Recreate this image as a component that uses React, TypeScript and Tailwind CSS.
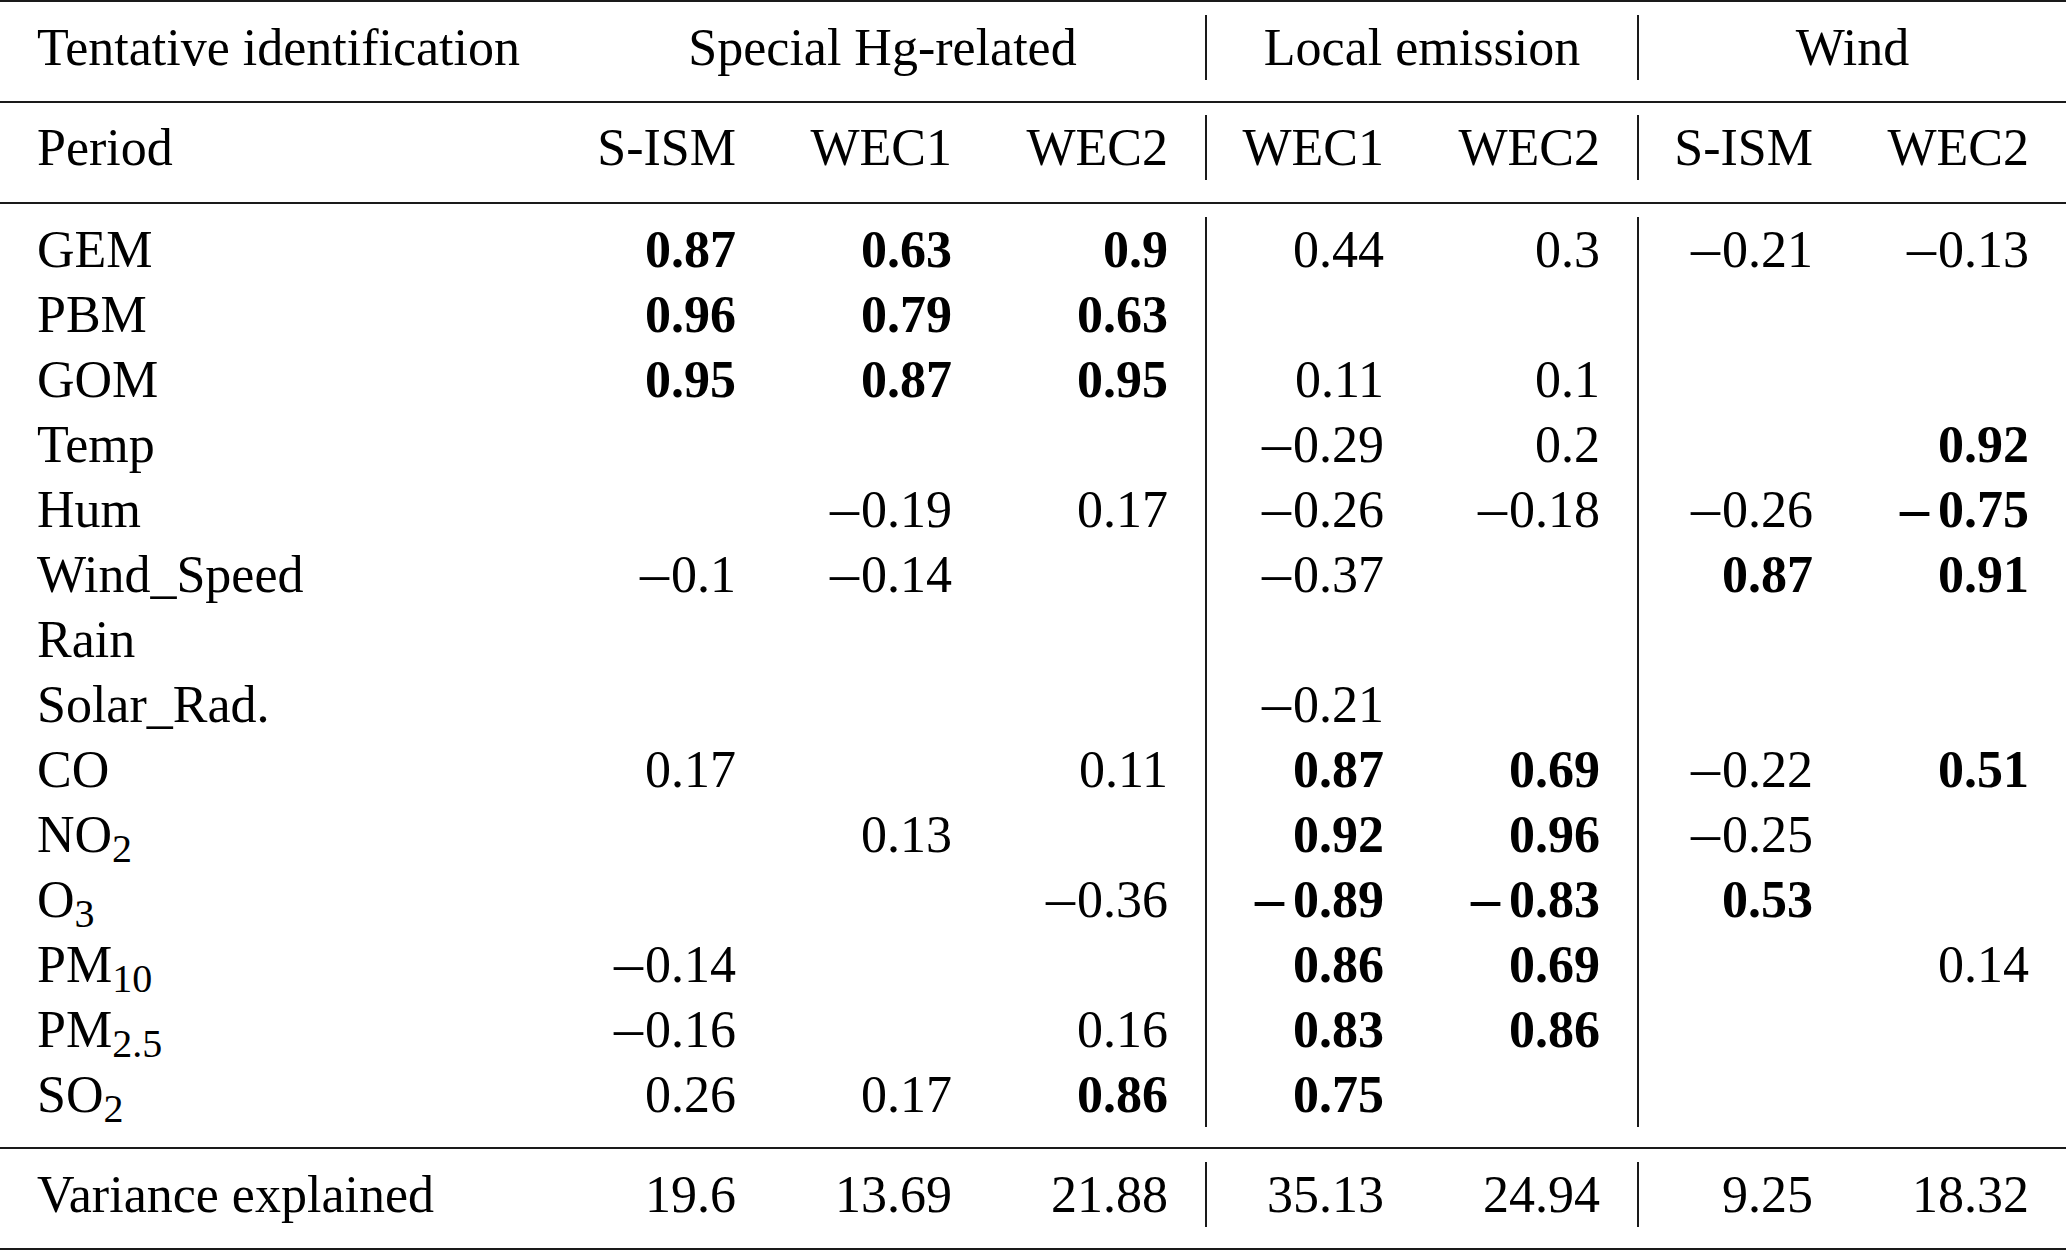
const cols = 'grid grid-cols-[560px_213px_216px_216px_216px_216px_213px_216px]'

type Cell = string

const Sub = ({ children }: { children: React.ReactNode }) => <sub className="text-[40px]">{children}</sub>

// "*" prefix marks a bold loading, "-" a negative value
const rows: { label: React.ReactNode; key: string; values: Cell[] }[] = [
  { key: 'GEM', label: 'GEM', values: ['*0.87', '*0.63', '*0.9', '0.44', '0.3', '-0.21', '-0.13'] },
  { key: 'PBM', label: 'PBM', values: ['*0.96', '*0.79', '*0.63', '', '', '', ''] },
  { key: 'GOM', label: 'GOM', values: ['*0.95', '*0.87', '*0.95', '0.11', '0.1', '', ''] },
  { key: 'Temp', label: 'Temp', values: ['', '', '', '-0.29', '0.2', '', '*0.92'] },
  { key: 'Hum', label: 'Hum', values: ['', '-0.19', '0.17', '-0.26', '-0.18', '-0.26', '*-0.75'] },
  { key: 'Wind', label: 'Wind_Speed', values: ['-0.1', '-0.14', '', '-0.37', '', '*0.87', '*0.91'] },
  { key: 'Rain', label: 'Rain', values: ['', '', '', '', '', '', ''] },
  { key: 'Solar', label: 'Solar_Rad.', values: ['', '', '', '-0.21', '', '', ''] },
  { key: 'CO', label: 'CO', values: ['0.17', '', '0.11', '*0.87', '*0.69', '-0.22', '*0.51'] },
  { key: 'NO2', label: <>NO<Sub>2</Sub></>, values: ['', '0.13', '', '*0.92', '*0.96', '-0.25', ''] },
  { key: 'O3', label: <>O<Sub>3</Sub></>, values: ['', '', '-0.36', '*-0.89', '*-0.83', '*0.53', ''] },
  { key: 'PM10', label: <>PM<Sub>10</Sub></>, values: ['-0.14', '', '', '*0.86', '*0.69', '', '0.14'] },
  { key: 'PM25', label: <>PM<Sub>2.5</Sub></>, values: ['-0.16', '', '0.16', '*0.83', '*0.86', '', ''] },
  { key: 'SO2', label: <>SO<Sub>2</Sub></>, values: ['0.26', '0.17', '*0.86', '*0.75', '', '', ''] },
]

const variance = ['19.6', '13.69', '21.88', '35.13', '24.94', '9.25', '18.32']

function Value({ v }: { v: Cell }) {
  const bold = v.startsWith('*')
  const raw = bold ? v.slice(1) : v
  const neg = raw.startsWith('-')
  const num = neg ? raw.slice(1) : raw
  return (
    <span className={bold ? 'font-bold' : ''}>
      {neg && (
        <span className={`text-[58px] leading-none ${bold ? 'mr-[9px]' : 'mr-[2px]'}`}>–</span>
      )}
      {num}
    </span>
  )
}

// columns 3 and 5 (0-based among values) carry the vertical rules
const sepClass = (i: number) => (i === 3 || i === 5 ? 'border-l-2 border-[#1a1a1a]' : '')

export default function App() {
  return (
    <div
      className="w-[2066px] bg-white text-black text-[52px] leading-[65px] whitespace-nowrap"
      style={{ fontFamily: '"Liberation Serif", "Times New Roman", serif' }}
    >
      <div className="border-t-2 border-b-2 border-[#1a1a1a]">
        {/* group header */}
        <div className={`${cols} pt-[13px] pb-[21px]`}>
          <div className="px-[37px]">Tentative identification</div>
          <div className="col-span-3 px-[37px] text-center">Special Hg-related</div>
          <div className="col-span-2 px-[37px] text-center border-l-2 border-[#1a1a1a]">Local emission</div>
          <div className="col-span-2 px-[37px] text-center border-l-2 border-[#1a1a1a]">Wind</div>
        </div>

        {/* period header */}
        <div className={`${cols} border-t-2 border-[#1a1a1a] pt-[12px] pb-[22px]`}>
          <div className="px-[37px]">Period</div>
          {['S-ISM', 'WEC1', 'WEC2', 'WEC1', 'WEC2', 'S-ISM', 'WEC2'].map((h, i) => (
            <div key={i} className={`pl-[30px] pr-[37px] text-right ${sepClass(i)}`}>
              {h}
            </div>
          ))}
        </div>

        {/* loadings */}
        <div className={`${cols} border-t-2 border-[#1a1a1a] pt-[13px] pb-[20px]`}>
          {rows.map((r) => (
            <div key={r.key} className="contents">
              <div className="px-[37px]">{r.label}</div>
              {r.values.map((v, i) => (
                <div key={i} className={`pl-[30px] pr-[37px] text-right ${sepClass(i)}`}>
                  <Value v={v} />
                </div>
              ))}
            </div>
          ))}
        </div>

        {/* variance */}
        <div className={`${cols} border-t-2 border-[#1a1a1a] pt-[13px] pb-[21px]`}>
          <div className="px-[37px]">Variance explained</div>
          {variance.map((v, i) => (
            <div key={i} className={`pl-[30px] pr-[37px] text-right ${sepClass(i)}`}>
              {v}
            </div>
          ))}
        </div>
      </div>
    </div>
  )
}
